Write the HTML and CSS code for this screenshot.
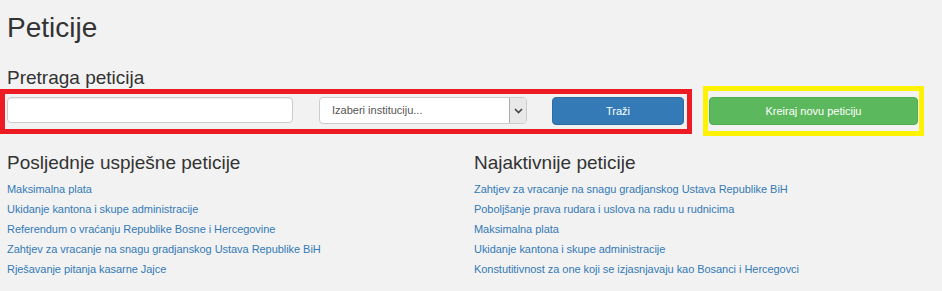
FILE: index.html
```html
<!DOCTYPE html>
<html lang="bs">
<head>
<meta charset="utf-8">
<title>Peticije</title>
<link rel="stylesheet" href="styles.css">
</head>
<body>
<div class="page">
  <h1 class="title">Peticije</h1>
  <h2 class="subtitle">Pretraga peticija</h2>
  <div class="toolbar">
    <form class="search-box">
      <input class="search-input" type="text">
      <div class="select">
        <span class="select-text">Izaberi instituciju...</span>
        <span class="select-arrow">
          <svg width="9" height="6" viewBox="0 0 9 6"><path d="M1 1 L4.5 4.5 L8 1" fill="none" stroke="#444" stroke-width="1.6"/></svg>
        </span>
      </div>
      <button class="btn btn-primary" type="button">Traži</button>
    </form>
    <div class="create-box">
      <button class="btn btn-success" type="button">Kreiraj novu peticiju</button>
    </div>
  </div>
  <div class="columns">
    <div class="col">
      <h3 class="col-title">Posljednje uspješne peticije</h3>
      <ul class="links">
        <li><a href="#">Maksimalna plata</a></li>
        <li><a href="#">Ukidanje kantona i skupe administracije</a></li>
        <li><a href="#">Referendum o vraćanju Republike Bosne i Hercegovine</a></li>
        <li><a href="#">Zahtjev za vracanje na snagu gradjanskog Ustava Republike BiH</a></li>
        <li><a href="#">Rješavanje pitanja kasarne Jajce</a></li>
      </ul>
    </div>
    <div class="col">
      <h3 class="col-title">Najaktivnije peticije</h3>
      <ul class="links">
        <li><a href="#">Zahtjev za vracanje na snagu gradjanskog Ustava Republike BiH</a></li>
        <li><a href="#">Poboljšanje prava rudara i uslova na radu u rudnicima</a></li>
        <li><a href="#">Maksimalna plata</a></li>
        <li><a href="#">Ukidanje kantona i skupe administracije</a></li>
        <li><a href="#">Konstutitivnost za one koji se izjasnjavaju kao Bosanci i Hercegovci</a></li>
      </ul>
    </div>
  </div>
</div>
</body>
</html>
```

FILE: styles.css
```css
* { box-sizing: border-box; }
html, body { margin: 0; padding: 0; }
body {
  background: #f2f2f2;
  font-family: "Liberation Sans", Arial, sans-serif;
  color: #333;
}
.page { width: 942px; height: 291px; overflow: hidden; }
.title {
  margin: 11px 0 0 7px;
  font-size: 28px;
  line-height: 34px;
  font-weight: normal;
  color: #333;
}
.subtitle {
  margin: 22px 0 0 7px;
  font-size: 19px;
  line-height: 22px;
  font-weight: normal;
  color: #333;
}
.toolbar {
  display: flex;
  align-items: flex-start;
  margin-top: -3px;
}
.search-box {
  margin: 3px 0 0 0;
  width: 692px;
  border: 5px solid #ed1c24;
  padding: 3px 3px 4px 2px;
  display: flex;
  align-items: flex-start;
}
.search-input {
  width: 286px;
  height: 26px;
  margin: 0;
  border: 1px solid #ccc;
  border-radius: 4px;
  background: #fff;
  box-shadow: inset 0 1px 1px rgba(0,0,0,0.075);
}
.select {
  margin-left: 26px;
  width: 208px;
  height: 27px;
  border: 1px solid #ccc;
  border-radius: 4px;
  background: #fff;
  display: flex;
  align-items: stretch;
  overflow: hidden;
}
.select-text {
  flex: 1;
  font-size: 11px;
  line-height: 25px;
  padding-left: 12px;
  color: #555;
}
.select-arrow {
  width: 17px;
  background: #e8e8e8;
  border-left: 1px solid #adadad;
  display: flex;
  align-items: center;
  justify-content: center;
}
.btn {
  height: 28px;
  border-radius: 4px;
  color: #fff;
  font-family: "Liberation Sans", Arial, sans-serif;
  font-size: 11px;
  padding: 0;
  text-align: center;
}
.btn-primary {
  margin-left: 25px;
  width: 132px;
  background: #337ab7;
  border: 1px solid #2e6da4;
}
.create-box {
  margin-left: 11px;
  width: 221px;
  border: 5px solid #fff200;
  padding: 6px 1px 6px 1px;
  display: flex;
}
.btn-success {
  width: 209px;
  background: #5cb85c;
  border: 1px solid #4cae4c;
}
.columns {
  display: grid;
  grid-template-columns: 467px 467px;
  padding-left: 7px;
  margin-top: 16px;
}
.col-title {
  margin: 0;
  font-size: 19px;
  line-height: 22px;
  font-weight: normal;
  color: #333;
}
.links {
  list-style: none;
  margin: 5px 0 0 0;
  padding: 0;
}
.links li {
  font-size: 11px;
  line-height: 20px;
  height: 20px;
  letter-spacing: -0.05px;
}
.links a {
  color: #337ab7;
  text-decoration: none;
}
```
